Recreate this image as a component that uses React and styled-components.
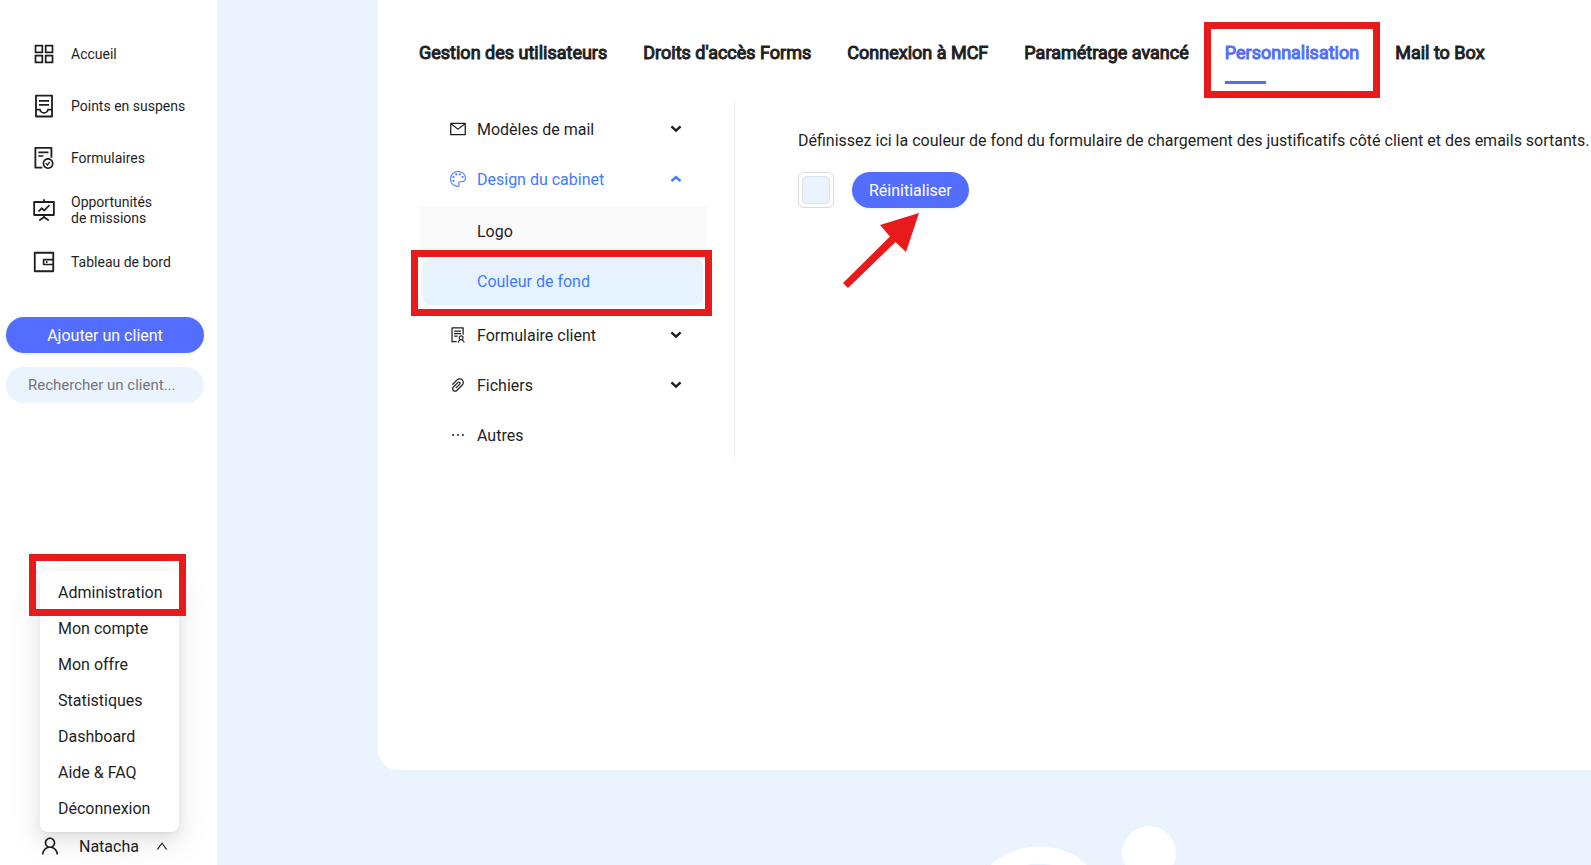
import React from 'react'
import styled, { createGlobalStyle } from 'styled-components'
import {
  AiOutlineAppstore,
  AiOutlineContainer,
  AiOutlineEllipsis,
  AiOutlineFileDone,
  AiOutlineFundProjectionScreen,
  AiOutlineMail,
  AiOutlinePaperClip,
  AiOutlineSolution,
  AiOutlineUp,
  AiOutlineUser,
  AiOutlineWallet,
} from 'react-icons/ai'

const GlobalStyle = createGlobalStyle`
  * {
    box-sizing: border-box;
  }
  body {
    margin: 0;
    font-family: Roboto, 'Liberation Sans', sans-serif;
    font-size: 16px;
    color: #1f1f1f;
    background-color: #ebf3ff;
  }
  button, input {
    font: inherit;
  }
  a {
    color: inherit;
    text-decoration: none;
  }
`

const Layout = styled.div`
  display: flex;
  height: 100vh;
  overflow: hidden;
`

const Sidebar = styled.aside`
  display: flex;
  flex-direction: column;
  flex: 0 0 217px;
  min-width: 0;
  padding: 28px 13px 0 6px;
  background-color: #fff;
`

const SideLink = styled.a`
  display: flex;
  align-items: center;
  gap: 14px;
  height: 52px;
  padding-left: 25px;
  font-size: 14px;
  line-height: 16px;
  white-space: pre-line;

  svg {
    flex: none;
    width: 26px;
    height: 26px;
  }
`

const Button = styled.button`
  height: 36px;
  padding: 0 17px;
  border: none;
  border-radius: 18px;
  background-color: #536dfe;
  box-shadow: 0 2px 0 rgba(5, 145, 255, 0.06);
  color: #fff;
  cursor: pointer;
`

const AddButton = styled(Button)`
  margin-top: 29px;
`

const Search = styled.input`
  height: 36px;
  min-width: 0;
  margin-top: 14px;
  padding: 0 22px;
  border: none;
  border-radius: 18px;
  background-color: #ebf3ff;
  font-size: 15px;

  &::placeholder {
    color: #757575;
  }
`

const Account = styled.div`
  position: relative;
  margin-top: auto;
  padding-left: 33px;
`

const AccountButton = styled.button`
  display: flex;
  align-items: center;
  height: 38px;
  padding: 0;
  border: none;
  background: none;
  color: inherit;

  svg:first-child {
    width: 22px;
    height: 22px;
    margin-right: 18px;
  }
  svg:last-child {
    width: 14px;
    height: 14px;
    margin-left: 16px;
  }
`

const Dropdown = styled.nav`
  position: absolute;
  left: 34px;
  bottom: 33px;
  width: 139px;
  padding: 4px 0 5px;
  border-radius: 8px;
  background-color: #fff;
  box-shadow: 0 6px 16px 0 rgba(0, 0, 0, 0.08),
    0 3px 6px -4px rgba(0, 0, 0, 0.12), 0 9px 28px 8px rgba(0, 0, 0, 0.05);
`

const DropdownLink = styled.a`
  display: block;
  padding-left: 18px;
  line-height: 36px;
`

const Highlight = styled.span`
  position: absolute;
  inset: ${(props) => props.$inset};
  border: solid 7px #e71b1b;
  pointer-events: none;
`

const Main = styled.main`
  display: flex;
  flex-direction: column;
  flex: 1;
  min-width: 0;
  padding-left: 161px;
`

const Panel = styled.section`
  flex: 1;
  padding: 33px 0 0 41px;
  border-bottom-left-radius: 20px;
  background-color: #fff;
`

const Tabs = styled.nav`
  display: flex;
  gap: 36px;
`

const Tab = styled.a`
  position: relative;
  height: 68px;
  font-size: 18px;
  line-height: 40px;
  white-space: nowrap;
  color: ${(props) => (props.$active ? '#536dfe' : 'inherit')};
  -webkit-text-stroke: 1px currentColor;
`

const Underline = styled.span`
  display: block;
  width: 41px;
  height: 3px;
  margin-top: 8px;
  background-color: #536dfe;
`

const Columns = styled.div`
  display: flex;
`

const Menu = styled.nav`
  display: flex;
  flex-direction: column;
  flex: 0 0 316px;
  gap: 4px;
  height: 360px;
  padding: 5px 27px 0 0;
  border-right: solid 1px #f0f0f0;
`

const MenuItem = styled.button`
  display: flex;
  align-items: center;
  height: 46px;
  padding: 0 25px 0 30px;
  border: none;
  background: none;
  text-align: left;
  color: ${(props) => (props.$active ? '#3f7bff' : 'inherit')};

  svg:first-child {
    width: 18px;
    height: 18px;
    margin-right: 10px;
  }
`

const Chevron = styled.svg`
  width: 12px;
  height: 8px;
  margin-left: auto;
  fill: none;
  stroke: currentColor;
  stroke-width: 2.4;
`

const SubMenu = styled.div`
  display: flex;
  flex-direction: column;
  gap: 4px;
  padding: 3px 4px;
  background-color: #fafafa;
`

const SubItem = styled.a`
  position: relative;
  padding-left: 54px;
  border-radius: 8px;
  line-height: 46px;
  color: ${(props) => (props.$active ? '#3f7bff' : 'inherit')};
  background-color: ${(props) => (props.$active ? '#e6f3ff' : 'transparent')};
`

const Content = styled.div`
  flex: 1;
  min-width: 0;
  padding: 28px 0 0 63px;
`

const Description = styled.p`
  margin: 0;
  line-height: 24px;
  white-space: nowrap;
`

const Actions = styled.div`
  position: relative;
  display: flex;
  gap: 18px;
  margin-top: 19px;
`

const ColorInput = styled.input`
  width: 36px;
  height: 36px;
  padding: 3px;
  border: solid 1px #d9d9d9;
  border-radius: 6px;
  background-color: #fff;
  appearance: none;

  &::-webkit-color-swatch-wrapper {
    padding: 0;
  }
  &::-webkit-color-swatch {
    border: solid 1px #dbe3ee;
    border-radius: 4px;
  }
`

const Arrow = styled.svg`
  position: absolute;
  left: 44px;
  top: 40px;
  width: 80px;
  height: 78px;
  fill: #e71b1b;
`

const Footer = styled.footer`
  flex: 0 0 95px;
  padding: 55px 0 0 588px;
  overflow: hidden;

  svg {
    display: block;
  }
`

const sideLinks = [
  { label: 'Accueil', icon: <AiOutlineAppstore /> },
  { label: 'Points en suspens', icon: <AiOutlineContainer /> },
  { label: 'Formulaires', icon: <AiOutlineFileDone /> },
  {
    label: 'Opportunités\nde missions',
    icon: <AiOutlineFundProjectionScreen />,
  },
  { label: 'Tableau de bord', icon: <AiOutlineWallet /> },
]

const accountLinks = [
  'Administration',
  'Mon compte',
  'Mon offre',
  'Statistiques',
  'Dashboard',
  'Aide & FAQ',
  'Déconnexion',
]

const tabs = [
  'Gestion des utilisateurs',
  "Droits d'accès Forms",
  'Connexion à MCF',
  'Paramétrage avancé',
  'Personnalisation',
  'Mail to Box',
]

function Arrowhead({ up }) {
  return (
    <Chevron viewBox="0 0 12 8">
      <path d={up ? 'M1.4 6.2L6 2L10.6 6.2' : 'M1.4 1.4L6 5.6L10.6 1.4'} />
    </Chevron>
  )
}

function Palette() {
  return (
    <svg viewBox="0 0 18 18" fill="currentColor">
      <path
        d="M8.6 16.4C4.5 16.2 1.5 13 1.5 9C1.5 4.8 4.9 1.5 9 1.5C13.2 1.5 16.5 4.3 16.5 7.8C16.5 10.3 14.6 11.7 12.4 11.7H11.1C10 11.7 9.3 12.6 9.8 13.6C10.5 14.9 10.1 16.5 8.6 16.4Z"
        fill="none"
        stroke="currentColor"
        strokeWidth="1.1"
      />
      <circle cx="4.5" cy="10.8" r="1.1" />
      <circle cx="4.5" cy="7" r="1.1" />
      <circle cx="7.2" cy="4.3" r="1.1" />
      <circle cx="10.8" cy="4.3" r="1.1" />
      <circle cx="13.5" cy="7" r="1.1" />
    </svg>
  )
}

function App() {
  return (
    <React.Fragment>
      <GlobalStyle />
      <Layout>
        <Sidebar>
          {sideLinks.map((link) => (
            <SideLink href="#" key={link.label}>
              {link.icon}
              {link.label}
            </SideLink>
          ))}
          <AddButton type="button">Ajouter un client</AddButton>
          <Search
            type="text"
            aria-label="Rechercher un client"
            placeholder="Rechercher un client..."
          />
          <Account>
            <AccountButton type="button">
              <AiOutlineUser />
              Natacha
              <AiOutlineUp />
            </AccountButton>
            <Dropdown>
              {accountLinks.map((label) => (
                <DropdownLink href="#" key={label}>
                  {label}
                </DropdownLink>
              ))}
              <Highlight $inset="-17px -7px 216px -11px" />
            </Dropdown>
          </Account>
        </Sidebar>

        <Main>
          <Panel>
            <Tabs>
              {tabs.map((label) => {
                const active = label === 'Personnalisation'
                return (
                  <Tab href="#" key={label} $active={active}>
                    {label}
                    {active && <Underline />}
                    {active && <Highlight $inset="-11px -21px 3px -21px" />}
                  </Tab>
                )
              })}
            </Tabs>
            <Columns>
              <Menu>
                <MenuItem type="button">
                  <AiOutlineMail />
                  Modèles de mail
                  <Arrowhead />
                </MenuItem>
                <MenuItem type="button" $active>
                  <Palette />
                  Design du cabinet
                  <Arrowhead up />
                </MenuItem>
                <SubMenu>
                  <SubItem href="#">Logo</SubItem>
                  <SubItem href="#" $active>
                    Couleur de fond
                    <Highlight $inset="-9px -9px -11px -12px" />
                  </SubItem>
                </SubMenu>
                <MenuItem type="button">
                  <AiOutlineSolution />
                  Formulaire client
                  <Arrowhead />
                </MenuItem>
                <MenuItem type="button">
                  <AiOutlinePaperClip />
                  Fichiers
                  <Arrowhead />
                </MenuItem>
                <MenuItem type="button">
                  <AiOutlineEllipsis />
                  Autres
                </MenuItem>
              </Menu>
              <Content>
                <Description>
                  Définissez ici la couleur de fond du formulaire de chargement
                  des justificatifs côté client et des emails sortants.
                </Description>
                <Actions>
                  <ColorInput
                    type="color"
                    aria-label="Couleur de fond"
                    defaultValue="#ebf3ff"
                  />
                  <Button type="button">Réinitialiser</Button>
                  <Arrow viewBox="0 0 80 78">
                    <path d="M77 1L38 13L48 24.5L1 71L6 76L53.5 30L64 40Z" />
                  </Arrow>
                </Actions>
              </Content>
            </Columns>
          </Panel>
          <Footer>
            <svg width="212" height="160" viewBox="0 0 212 160">
              <circle
                cx="73"
                cy="94"
                r="64"
                fill="none"
                stroke="#fff"
                strokeWidth="17"
              />
              <circle cx="183" cy="28" r="27" fill="#fff" />
            </svg>
          </Footer>
        </Main>
      </Layout>
    </React.Fragment>
  )
}

export default App
